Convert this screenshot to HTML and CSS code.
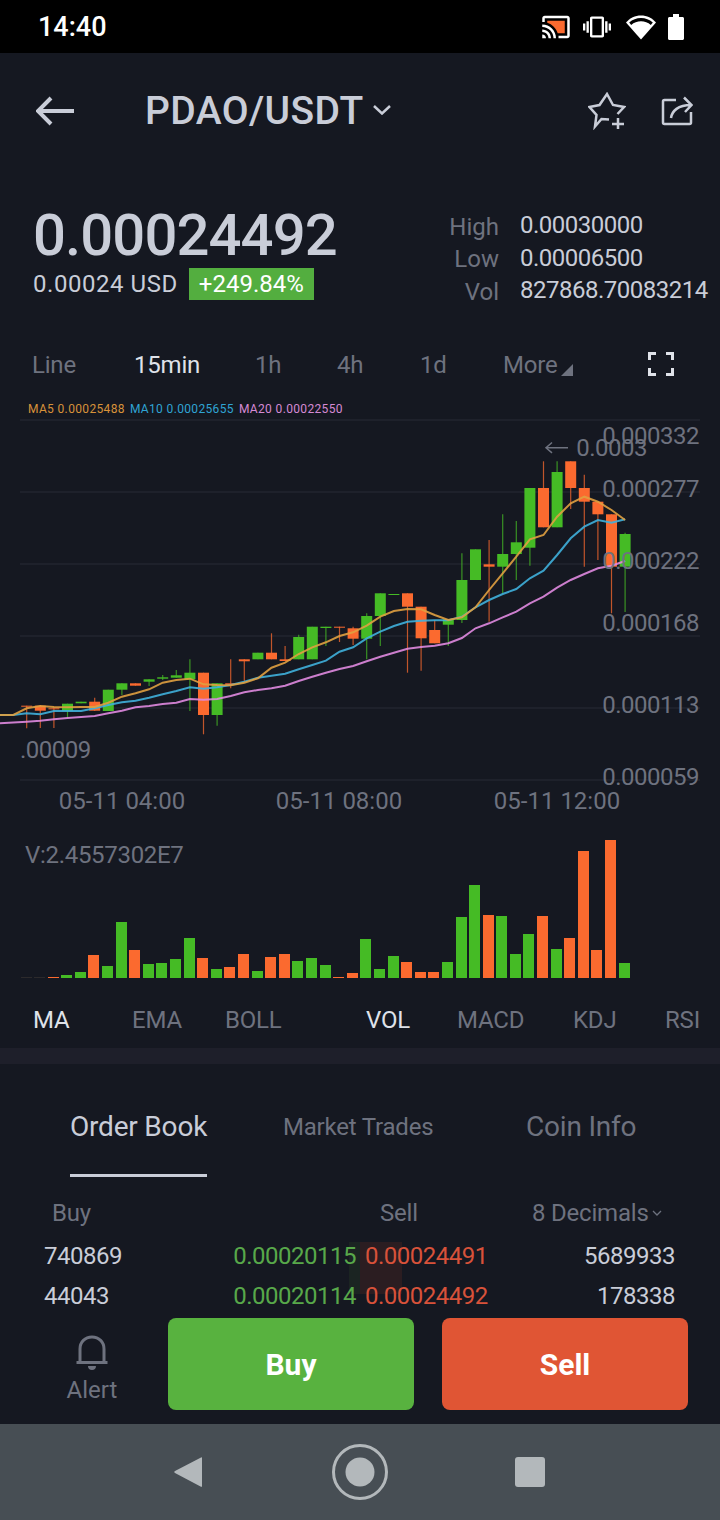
FILE: index.html
```html
<!DOCTYPE html>
<html lang="en">
<head>
    <meta charset="UTF-8">
    <meta name="viewport" content="width=device-width, initial-scale=1.0">
    <title>PDAO/USDT</title>
    <link rel="stylesheet" href="styles.css">
</head>
<body>

    <!-- Status Bar -->
    <div class="status-bar">
        <span class="status-time">14:40</span>
        <div class="status-icons">
            <svg class="icon-cast" viewBox="0 0 24 24">
                <path fill="#fb6a2f" d="M19 7H5v1.63c3.96 1.28 7.09 4.41 8.37 8.37H19V7z"/>
                <path fill="#fff" d="M1 18v3h3c0-1.66-1.34-3-3-3zm0-4v2c2.76 0 5 2.24 5 5h2c0-3.87-3.13-7-7-7zM1 10v2c4.97 0 9 4.03 9 9h2c0-6.08-4.93-11-11-11zm20-7H3c-1.1 0-2 .9-2 2v3h2V5h18v14h-7v2h7c1.1 0 2-.9 2-2V5c0-1.1-.9-2-2-2z"/>
            </svg>
            <svg class="icon-vibrate" viewBox="0 0 24 24">
                <path fill="#fff" d="M0 15h2V9H0v6zm3 2h2V7H3v10zm19-8v6h2V9h-2zm-3 8h2V7h-2v10zM16.5 3h-9C6.67 3 6 3.67 6 4.5v15c0 .83.67 1.5 1.5 1.5h9c.83 0 1.5-.67 1.5-1.5v-15c0-.83-.67-1.5-1.5-1.5zM16 19H8V5h8v14z"/>
            </svg>
            <svg class="icon-wifi" viewBox="0 0 30 26">
                <path fill="#fff" d="M15 25.500 0 8.500C4 4 9 1.500 15 1.500s11 2.500 15 7z"/>
                <path fill="#000" d="M3.200 8.600C6.500 5.500 10.500 4 15 4s8.500 1.500 11.800 4.600l-2 2.300C22 8.500 18.700 7.300 15 7.300s-7 1.200-9.800 3.600z"/>
            </svg>
            <svg class="icon-battery" viewBox="0 0 16 26">
                <path fill="#fff" d="M5 0h6v3h3.500c.8 0 1.500.7 1.500 1.500v20c0 .8-.7 1.500-1.500 1.500h-13C.7 26 0 25.300 0 24.500v-20C0 3.700.7 3 1.500 3H5z"/>
            </svg>
        </div>
    </div>

    <!-- Header -->
    <div class="header">
        <svg class="icon-back" viewBox="0 0 40 30">
            <path d="M38 15H3M15 2 2 15l13 13"/>
        </svg>
        <div class="pair">
            <span>PDAO/USDT</span>
            <svg class="icon-down" viewBox="0 0 18 10"><path d="M1 1l8 7.500L17 1"/></svg>
        </div>
        <svg class="icon-star" viewBox="0 0 38 38">
            <path d="M21 27.500l-7.500-.5L7 34.500 8.500 23 1.500 15l10-2L19 2l6 11 11 2-6.500 7"/>
            <path d="M24 32h12M30 26v11"/>
        </svg>
        <svg class="icon-share" viewBox="0 0 32 30">
            <path d="M15 4H3.500C2.500 4 2 4.500 2 5.500v21c0 1 .5 1.500 1.500 1.500h25c1 0 1.500-.5 1.500-1.500V16"/>
            <path d="M10 22c1-7 7-13 20-13M23 1.500 30.500 9 24 16"/>
        </svg>
    </div>

    <!-- Ticker -->
    <div class="ticker">
        <div class="ticker-main">
            <div class="price">0.00024492</div>
            <div class="price-sub">
                <span class="price-usd">0.00024 USD</span>
                <span class="change">+249.84%</span>
            </div>
        </div>
        <div class="stats">
            <span class="stat-label">High</span><span>0.00030000</span>
            <span class="stat-label">Low</span><span>0.00006500</span>
            <span class="stat-label">Vol</span><span>827868.70083214</span>
        </div>
    </div>

    <!-- Timeframes -->
    <div class="timeframes">
        <span>Line</span>
        <span class="active">15min</span>
        <span>1h</span>
        <span>4h</span>
        <span>1d</span>
        <span class="more">More<i class="corner"></i></span>
        <svg class="icon-full" viewBox="0 0 26 24">
            <path d="M1.500 8V1.500H8M18 1.500h6.500V8M24.500 16v6.500H18M8 22.500H1.500V16"/>
        </svg>
    </div>

    <!-- MA Legend -->
    <div class="legend">
        <span class="ma5">MA5 0.00025488</span>
        <span class="ma10">MA10 0.00025655</span>
        <span class="ma20">MA20 0.00022550</span>
    </div>

    <!-- Candle Chart -->
    <svg class="chart" viewBox="0 418 720 402">
        <g id="grid"></g>
        <g id="candles"></g>
        <g id="lines"></g>
        <path class="price-arrow" d="M568 447.700H546M552 442.500l-6 5.200 6 5.200"/>
        <g class="chart-labels">
            <text class="axis" x="699" y="444" text-anchor="end">0.000332</text>
            <text class="axis" x="699" y="497" text-anchor="end">0.000277</text>
            <text class="axis" x="699" y="569" text-anchor="end">0.000222</text>
            <text class="axis" x="699" y="631" text-anchor="end">0.000168</text>
            <text class="axis" x="699" y="713" text-anchor="end">0.000113</text>
            <text class="axis" x="699" y="785" text-anchor="end">0.000059</text>
            <text class="axis" x="647" y="456" text-anchor="end">0.0003</text>
            <text class="axis" x="20" y="758">.00009</text>
            <text x="122" y="809" text-anchor="middle">05-11 04:00</text>
            <text x="339" y="809" text-anchor="middle">05-11 08:00</text>
            <text x="557" y="809" text-anchor="middle">05-11 12:00</text>
        </g>
    </svg>

    <!-- Volume -->
    <div class="volume">
        <div class="volume-label">V:2.4557302E7</div>
        <div class="bars" id="bars"></div>
    </div>

    <!-- Indicators -->
    <div class="indicators">
        <span class="active">MA</span>
        <span>EMA</span>
        <span>BOLL</span>
        <span class="active">VOL</span>
        <span>MACD</span>
        <span>KDJ</span>
        <span>RSI</span>
    </div>

    <div class="divider"></div>

    <!-- Order Book -->
    <div class="tabs">
        <span class="tab active">Order Book</span>
        <span class="tab small">Market Trades</span>
        <span class="tab">Coin Info</span>
    </div>

    <div class="book">
        <div class="book-head">
            <span>Buy</span>
            <span>Sell</span>
            <span class="decimals">8 Decimals<svg class="icon-tiny" viewBox="0 0 10 6"><path d="M1 1l4 4 4-4"/></svg></span>
        </div>
        <div class="depth"><i class="depth-buy"></i><i class="depth-sell"></i></div>
        <div class="book-row">
            <span>740869</span>
            <span class="bid">0.00020115</span>
            <span class="ask">0.00024491</span>
            <span class="qty">5689933</span>
        </div>
        <div class="book-row">
            <span>44043</span>
            <span class="bid">0.00020114</span>
            <span class="ask">0.00024492</span>
            <span class="qty">178338</span>
        </div>
    </div>

    <!-- Actions -->
    <div class="actions">
        <div class="alert">
            <svg class="icon-bell" viewBox="0 0 34 36">
                <path d="M5 27V14C5 7 10 2 17 2s12 5 12 12v13M1.500 27.500h31"/>
                <path class="bell-dot" d="M13 31h8c0 2.500-1.500 4-4 4s-4-1.500-4-4z"/>
            </svg>
            <span>Alert</span>
        </div>
        <div class="btn buy">Buy</div>
        <div class="btn sell">Sell</div>
    </div>

    <!-- Nav Bar -->
    <div class="nav-bar">
        <svg class="nav-back" viewBox="0 0 28 32"><path d="M27 1.500c.6-.4 1-.1 1 .6v28c0 .7-.5 1-1 .6L1 17c-1-.6-1-1.500 0-2.100z"/></svg>
        <svg class="nav-home" viewBox="0 0 56 56">
            <circle class="ring" cx="28" cy="28" r="26.500"/>
            <circle cx="28" cy="28" r="14.500"/>
        </svg>
        <div class="nav-square"></div>
    </div>

    <script src="script.js"></script>
</body>
</html>
```

FILE: styles.css
```css
/* Exchange pair screen */
body {
    font-family: 'Roboto', 'Liberation Sans', sans-serif;
    background-color: #151821;
    color: #6e727f;
    margin: 0;
    padding: 0;
    width: 720px;
    height: 1520px;
    overflow: hidden;
    font-size: 24px;
}

/* Status Bar */
.status-bar {
    height: 53px;
    box-sizing: border-box;
    background-color: #000;
    color: #fff;
    display: flex;
    align-items: center;
    justify-content: space-between;
    padding: 1px 36px 0 38px;
}

.status-time {
    font-size: 27px;
    font-weight: 500;
}

.status-icons {
    display: flex;
    align-items: center;
}

.icon-cast {
    width: 30px;
    height: 30px;
}

.icon-vibrate {
    width: 28px;
    height: 28px;
    margin-left: 12px;
}

.icon-wifi {
    width: 30px;
    height: 26px;
    margin-left: 15px;
}

.icon-battery {
    width: 16px;
    height: 26px;
    margin-left: 12px;
}

/* Header */
.header {
    height: 116px;
    display: flex;
    align-items: center;
    padding-left: 36px;
    color: #c9cdd8;
}

.header svg {
    fill: none;
    stroke: #c9cdd8;
}

.icon-back {
    width: 40px;
    height: 30px;
    stroke-width: 4;
}

.pair {
    display: flex;
    align-items: center;
    margin-left: 69px;
    width: 443px;
    font-size: 39px;
    font-weight: 500;
    letter-spacing: 0.4px;
}

.icon-down {
    width: 18px;
    height: 10px;
    margin: 0 0 3px 9px;
    stroke-width: 2.5;
}

.icon-star {
    width: 38px;
    height: 38px;
    stroke-width: 2.5;
}

.icon-share {
    width: 32px;
    height: 30px;
    margin-left: 35px;
    stroke-width: 2.5;
}

/* Ticker */
.ticker {
    height: 171px;
    display: flex;
}

.ticker-main {
    width: 386px;
    padding: 37px 0 0 33px;
    flex: none;
}

.price {
    font-size: 58px;
    line-height: 58px;
    font-weight: 500;
    color: #c9cdd8;
    letter-spacing: -0.9px;
}

.price-sub {
    display: flex;
    align-items: center;
    height: 32px;
    margin-top: 4px;
    color: #c9cdd8;
}

.price-usd {
    letter-spacing: 0.55px;
}

.change {
    height: 32px;
    line-height: 32px;
    margin-left: 11px;
    padding: 0 10px;
    background-color: #53ae3f;
    color: #fff;
}

.stats {
    padding-top: 40px;
    display: grid;
    grid-template-columns: 80px 1fr;
    grid-auto-rows: 32.5px;
    column-gap: 21px;
    align-items: center;
    color: #c9cdd8;
    letter-spacing: -0.5px;
    white-space: nowrap;
}

.stat-label {
    color: #6e727f;
    text-align: right;
    letter-spacing: 0;
    padding-top: 3px;
}

/* Timeframes */
.timeframes {
    height: 50px;
    padding-left: 32px;
    display: grid;
    grid-template-columns: 102px 121px 82px 83px 83px 145px auto;
    align-items: center;
    letter-spacing: -0.2px;
}

.active {
    color: #dfe2e9;
}

.more {
    display: flex;
    align-items: center;
}

.corner {
    width: 0;
    height: 0;
    margin: 9px 0 0 4px;
    border-left: 12px solid transparent;
    border-bottom: 12px solid #6e727f;
}

.icon-full {
    width: 26px;
    height: 24px;
    margin-bottom: 3px;
    fill: none;
    stroke: #dfe2e9;
    stroke-width: 3;
}

/* MA Legend */
.legend {
    height: 28px;
    box-sizing: border-box;
    padding: 10px 0 0 28px;
    display: flex;
    gap: 5px;
    font-size: 12px;
    line-height: 18px;
    letter-spacing: 0.35px;
}

.ma5 { color: #d8923a; }
.ma10 { color: #2fa4d4; }
.ma20 { color: #d58ad4; }

/* Candle Chart */
.chart {
    display: block;
    width: 720px;
    height: 402px;
}

.chart-labels text {
    font-size: 24px;
    fill: #6e727f;
}

.chart-labels .axis {
    letter-spacing: -0.5px;
}

.price-arrow {
    fill: none;
    stroke: #6e727f;
    stroke-width: 1.5;
}

/* Volume */
.volume {
    height: 180px;
    box-sizing: border-box;
    padding: 19px 0 0 25px;
}

.volume-label {
    height: 32px;
    line-height: 32px;
    letter-spacing: -0.3px;
}

.bars {
    height: 138px;
    margin: -31px 0 0 -4.500px;
    display: flex;
    align-items: flex-end;
    gap: 2.600px;
}

.bar {
    flex: none;
    width: 11px;
}

.bar.up { background-color: #45bb25; }
.bar.down { background-color: #fb6a2f; }
.bar.flat { background-color: #2c2a2c; }

/* Indicators */
.indicators {
    height: 48px;
    box-sizing: border-box;
    padding: 0 0 8px 33px;
    display: grid;
    grid-template-columns: 99px 93px 141px 91px 116px 92px 1fr;
    align-items: center;
    letter-spacing: -0.2px;
}

.divider {
    height: 16px;
    background-color: #1e1f2a;
}

/* Order Book */
.tabs {
    height: 112px;
    box-sizing: border-box;
    padding: 45px 0 0 70px;
    display: flex;
    align-items: flex-start;
}

.tab {
    flex: none;
    font-size: 28px;
    line-height: 36px;
    height: 65px;
    white-space: nowrap;
    letter-spacing: -0.2px;
}

.tab.active {
    width: 137px;
    margin-right: 76px;
    color: #c9cdd8;
    border-bottom: 3px solid #c9cdd8;
}

.tab.small {
    font-size: 24px;
    width: 243px;
}

.book {
    height: 142px;
    box-sizing: border-box;
    position: relative;
}

.book-head {
    height: 60px;
    padding: 14px 55px 0 52px;
    box-sizing: border-box;
    display: grid;
    grid-template-columns: 328px 152px 1fr;
    align-items: center;
    letter-spacing: -0.2px;
}

.decimals {
    display: flex;
    align-items: center;
}

.icon-tiny {
    width: 10px;
    height: 6px;
    margin-left: 3px;
    fill: none;
    stroke: #6e727f;
    stroke-width: 1.300;
}

/* faint depth bars behind the two middle columns */
.depth {
    position: absolute;
    left: 349px;
    top: 66px;
    width: 53px;
    height: 52px;
    display: flex;
}

.depth-buy {
    width: 11px;
    background-color: #1b2422;
}

.depth-sell {
    flex: 1;
    background-color: #2b1d21;
}

.book-row {
    position: relative;
    height: 40px;
    padding: 0 45px 0 44px;
    display: grid;
    grid-template-columns: 150px 162px 123px 1fr;
    align-items: center;
    color: #c9cdd8;
    letter-spacing: -0.5px;
}

.bid {
    color: #58a84a;
    text-align: right;
}

.ask {
    color: #d8523a;
    padding-left: 9px;
    white-space: nowrap;
}

.qty {
    text-align: right;
}

/* Actions */
.actions {
    height: 106px;
    display: flex;
}

.alert {
    width: 168px;
    box-sizing: border-box;
    padding: 17px 16px 0 32px;
    display: flex;
    flex-direction: column;
    align-items: center;
}

.icon-bell {
    width: 34px;
    height: 36px;
    fill: none;
    stroke: #6e727f;
    stroke-width: 3;
}

.bell-dot {
    fill: #6e727f;
    stroke: none;
}

.alert span {
    margin-top: 3px;
    line-height: 32px;
}

.btn {
    width: 246px;
    height: 92px;
    border-radius: 8px;
    color: #fff;
    font-size: 30px;
    font-weight: 700;
    text-align: center;
    line-height: 94px;
}

.buy { background-color: #58b23f; }

.sell {
    background-color: #e05534;
    margin-left: 28px;
}

/* Nav Bar */
.nav-bar {
    height: 96px;
    background-color: #474e54;
    display: flex;
    align-items: center;
    padding-left: 174px;
}

.nav-bar svg {
    fill: #b3b8bb;
}

.nav-back {
    width: 28px;
    height: 32px;
}

.nav-home {
    width: 56px;
    height: 56px;
    margin-left: 130px;
}

.ring {
    fill: none;
    stroke: #b3b8bb;
    stroke-width: 3;
}

.nav-square {
    width: 30px;
    height: 30px;
    margin-left: 127px;
    border-radius: 3px;
    background-color: #b3b8bb;
}
```

FILE: script.js
```js
// chart data is in page pixels, the svg viewBox starts at y=418
var UP = "#45bb25", DOWN = "#fb6a2f";
var startX = 26.7, stepX = 13.6, bodyW = 11;

// [up?, bodyTop, bodyBottom, wickTop, wickBottom]
var candles = [
    [0,705.7,706.7,705.7,728.3],[0,705.7,710.7,705,728],[0,708.3,709.3,708,728],
    [1,703.7,711,703.7,718],[1,701.7,703.3,701.7,703.3],[0,701.7,710.7,697.7,711],
    [1,689.7,711,689.7,711],[1,683.3,689.7,683.3,695],[0,683.3,685.7,683.3,685.7],
    [1,679.3,681.7,679.3,686],[1,677.3,678.7,675,680],[1,675.3,677.7,670,677.7],
    [1,672.7,679.3,659.3,711],[0,672.7,715,672.7,734.3],[1,683.3,715,683.3,725.7],
    [0,683.3,684.7,659.3,688.3],[0,659.3,661.3,659.3,681.7],[1,652.7,659.3,652.7,659.3],
    [0,652.7,659.3,633.3,659.3],[0,659.3,661,646,661],[1,637,659.3,634.7,659.3],
    [1,626.7,659.3,626.7,659.3],[1,626.7,628,626.7,646],[0,626.7,627.7,626.7,642],
    [0,628.3,638.7,626.7,645],[1,616,638.7,613.3,659.3],[1,593.3,616,593.3,646],
    [1,594,595,594,595],[0,593.3,606.7,593.3,672.7],[0,606.7,638.3,606.7,670.7],
    [0,630,643.3,620,643.3],[1,619.3,624.7,619.3,646],[1,580,620,553.3,623],
    [1,549.3,580,549.3,580],[0,564.3,566.7,540,621.7],[1,554,566.7,514.3,593.3],
    [1,542.3,554,521,580],[1,488,547.7,488,565.7],[0,488,527.3,461.3,527.3],
    [1,472,527.3,461.3,527.3],[0,461.3,488,461.3,509],[0,488,501.7,474.7,566.7],
    [0,501.7,514.3,501.7,560],[0,514.3,566.7,514.3,613.3],[1,534,566.7,532.7,612]
];

var ma5 = [708.3,706,707,707.3,707,707,702.7,696.7,693.3,689.3,682.7,680,678.7,684.3,685,685.3,682.7,678.3,667.7,662.7,654,647.3,642.3,636,632.3,625.7,616.7,611,609,609.3,615,620,617.3,607.3,590,573.3,556.7,539.3,535,516.7,503.3,496.7,501.7,510,520];
var ma10 = [713.3,714.3,711,711,711,708.3,705,702.3,700.7,697.7,694.3,691,687.3,688.7,687.3,685,681.7,677.7,675.7,673.7,669.3,665,660.7,651.7,647.3,638.3,631.7,626,621.7,620.7,620.3,620.3,616.7,607.3,600,594,589,578.3,570.7,555,538.3,526.7,520,522.7,519.3];
var ma20 = [721.7,720.7,719.3,718,717,716,713.3,710.7,707.3,706,704,702.7,699,699.7,699,696,692.3,690,688.3,685.7,681,676.7,672.7,669,666,661.3,656.7,652.7,648.7,647,645.7,643.3,638,628.3,623.3,617.3,611.7,603.3,596.7,587.7,580,574,568.3,565.7,561];

// [kind, height] kind: 1 up, 0 down, 2 flat
var volumes = [
    [2,1],[2,1],[0,0.7],[1,3],[1,6],[0,22.7],[1,12.3],[1,55.7],[0,28],[1,14.3],[1,15.3],
    [1,19.3],[1,40],[0,19.7],[1,8.7],[0,11],[0,24.3],[1,6.7],[0,20.7],[0,23.7],[1,16.7],[1,19.7],
    [1,13],[0,1],[0,5.3],[1,39.3],[1,8.7],[1,22],[0,15.7],[0,5.7],[0,5.7],[1,16],[1,60.7],[1,93],
    [0,63.3],[1,61.7],[1,23.7],[1,44.3],[0,62.3],[1,28.7],[0,40],[0,127.3],[0,27.7],[0,138],[1,14.7]
];

var gridHtml = "";
[420, 492, 564, 636, 708, 780].forEach(function (y) {
    gridHtml += `<line x1="20" x2="700" y1="${y}" y2="${y}" stroke="#22252f" stroke-width="1.5"/>`;
});
document.getElementById("grid").innerHTML = gridHtml;

var candleHtml = "";
candles.forEach(function (c, i) {
    var x = startX + i * stepX;
    var color = c[0] ? UP : DOWN;
    candleHtml += `<line x1="${x}" x2="${x}" y1="${c[3]}" y2="${c[4]}" stroke="${color}" stroke-opacity="0.75" stroke-width="1.2"/>`;
    candleHtml += `<rect x="${x - bodyW / 2}" y="${c[1]}" width="${bodyW}" height="${c[2] - c[1]}" fill="${color}"/>`;
});
document.getElementById("candles").innerHTML = candleHtml;

function linePoints(values, prefix) {
    return prefix + values.map(function (y, i) {
        return (startX + i * stepX).toFixed(1) + "," + y;
    }).join(" ");
}

document.getElementById("lines").innerHTML =
    `<polyline points="${linePoints(ma20, "0,723.3 ")}" fill="none" stroke="#e08ae0" stroke-opacity="0.9" stroke-width="2"/>` +
    `<polyline points="${linePoints(ma10, "0,715 13.3,715 ")}" fill="none" stroke="#3fb0dc" stroke-opacity="0.9" stroke-width="2"/>` +
    `<polyline points="${linePoints(ma5, "0,715 13.3,715 ")}" fill="none" stroke="#e0a040" stroke-opacity="0.9" stroke-width="2"/>`;

var kinds = ["down", "up", "flat"];
var barsEl = document.getElementById("bars");
volumes.forEach(function (v) {
    var bar = document.createElement("div");
    bar.className = "bar " + kinds[v[0]];
    bar.style.height = v[1] + "px";
    barsEl.appendChild(bar);
});
```
